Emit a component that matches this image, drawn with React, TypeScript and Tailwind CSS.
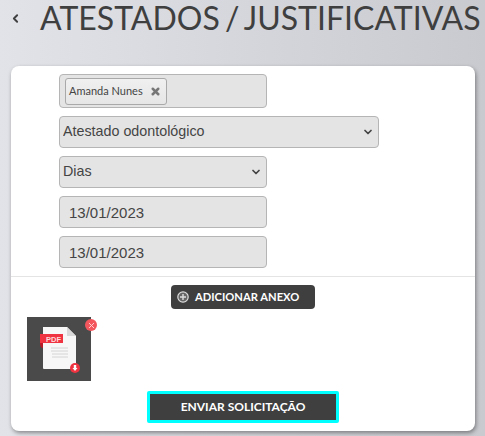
import { ChevronDown, ChevronLeft, X } from "lucide-react";

const fieldClass =
  "h-8 rounded-[4px] border border-[#b5b5b5] bg-[#e4e4e4] text-[#444] outline-none font-['Liberation_Sans',sans-serif]";

function SelectField({ width, value, options }: { width: string; value: string; options: string[] }) {
  return (
    <div className={`relative ${width}`}>
      <select
        defaultValue={value}
        className={`${fieldClass} w-full appearance-none pl-[3px] text-[14.3px]`}
      >
        {options.map(o => (
          <option key={o}>{o}</option>
        ))}
      </select>
      <ChevronDown
        size={12}
        strokeWidth={3.5}
        className="absolute right-[5px] top-[10px] text-[#444] pointer-events-none"
      />
    </div>
  );
}

function PdfThumb() {
  return (
    <div className="relative w-16 h-16 bg-[#4a4a4a]">
      <svg viewBox="0 0 64 64" className="w-16 h-16">
        <path d="M16 10h24l9 9v32a1 1 0 0 1-1 1H17a1 1 0 0 1-1-1z" fill="#f7f7f7" />
        <path d="M40 10l9 9H40z" fill="#d9d9d9" />
        <path d="M13 17h23v9H16c-2 0-3 1-3 4z" fill="#ef3340" />
        <path d="M13 26c0 3 1 5 3 5v-5z" fill="#b81c28" />
        <text x="19" y="24.800" fontSize="7.500" fontWeight="700" fill="#ffd9dc" fontFamily="Liberation Sans, sans-serif">
          PDF
        </text>
        <g stroke="#d4d4d4" strokeWidth="1">
          <path d="M24 31h17M24 34h17M25 37h16M25 40h16" />
        </g>
        <circle cx="48" cy="51" r="5" fill="#ef3340" />
        <path d="M46.800 48h2.400v3h1.300l-2.500 3-2.500-3h1.300z" fill="#fff" />
      </svg>
      <span className="absolute top-[2px] -right-[6px] w-3 h-3 rounded-full bg-[#f4565d] flex items-center justify-center">
        <X size={9} strokeWidth={2.5} className="text-[#ffd5d5]" />
      </span>
    </div>
  );
}

export default function App() {
  return (
    <div className="w-[485px] h-[436px] overflow-hidden bg-gradient-to-r from-[#e2e3e8] to-[#c9cacf] font-['Lato',sans-serif]">
      <header className="flex items-center h-[66px] pb-[30px] pl-[9px]">
        <ChevronLeft size={13} strokeWidth={3.5} className="text-[#3f3f3f] shrink-0" />
        <h1 className="ml-[18px] shrink-0 text-[32px] leading-none font-normal text-[#3f3f3f] whitespace-nowrap [word-spacing:-3px]">
          ATESTADOS / JUSTIFICATIVAS
        </h1>
      </header>

      <main className="mx-[11px] w-[464px] h-[365px] bg-white rounded-[8px] shadow-[1px_2px_4px_rgba(0,0,0,0.4)]">
        <form className="flex flex-col gap-2 pt-2 pl-12">
          <div className={`${fieldClass} w-[208px] !h-[34px] flex items-center pl-[5px]`}>
            <span className="h-[27px] pl-[3px] pr-[5px] flex items-center gap-[7px] rounded-[3px] border border-[#a9a9a9] bg-gradient-to-b from-[#f0f0f0] to-[#e6e6e6] font-['Lato',sans-serif] text-[11px] text-[#444]">
              Amanda Nunes
              <X size={11} strokeWidth={5.5} className="text-[#777]" />
            </span>
          </div>
          <SelectField width="w-[320px]" value="Atestado odontológico" options={["Atestado odontológico", "Atestado médico"]} />
          <SelectField width="w-[208px]" value="Dias" options={["Dias", "Horas"]} />
          <input readOnly value="13/01/2023" className={`${fieldClass} w-[208px] px-[9px] text-[15px]`} />
          <input readOnly value="13/01/2023" className={`${fieldClass} w-[208px] px-[9px] text-[15px]`} />
        </form>

        <hr className="mt-2 border-t border-[#e4e4e4]" />

        <div className="flex justify-center mt-2">
          <button
            type="button"
            className="w-[144px] h-6 rounded-[4px] bg-[#3f3f3f] text-white text-[11.2px] font-bold flex items-center gap-[6px] pl-[6px] whitespace-nowrap"
          >
            <svg viewBox="0 0 12 12" className="w-3 h-3 shrink-0">
              <circle cx="6" cy="6" r="5.2" fill="#666" stroke="#ddd" strokeWidth="1.2" />
              <path d="M6 3v6M3 6h6" stroke="#ddd" strokeWidth="1.400" />
            </svg>
            ADICIONAR ANEXO
          </button>
        </div>

        <div className="mt-2 ml-4">
          <PdfThumb />
        </div>

        <div className="flex justify-center mt-[10px]">
          <button
            type="button"
            className="w-[192px] h-8 border-[3px] border-[#00ffff] rounded-[2px] bg-[#3f3f3f] text-white text-[12px] font-bold"
          >
            ENVIAR SOLICITAÇÃO
          </button>
        </div>
      </main>
    </div>
  );
}
